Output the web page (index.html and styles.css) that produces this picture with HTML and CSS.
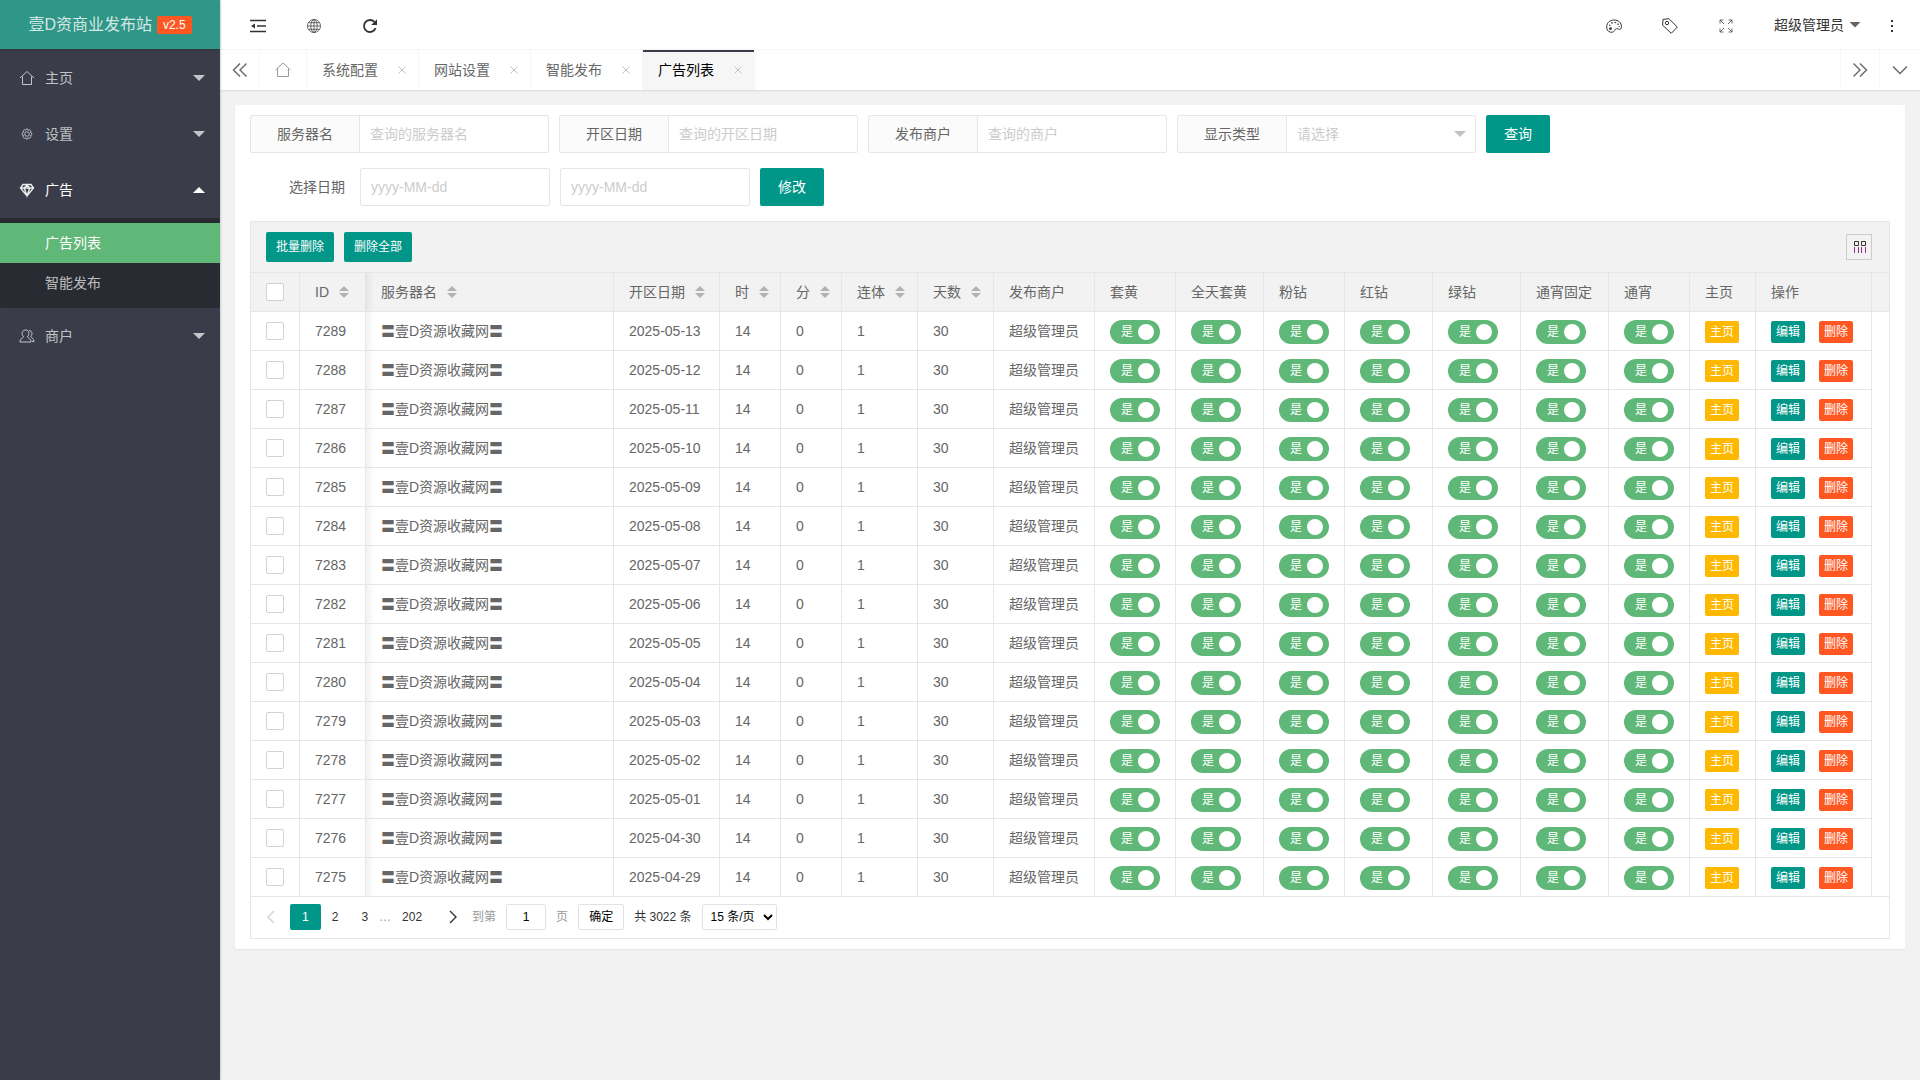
FILE: index.html
```html
<!DOCTYPE html>
<html lang="zh-CN">
<head>
<meta charset="utf-8">
<title>广告列表</title>
<link rel="stylesheet" href="styles.css">
</head>
<body>
<div class="app">
  <aside class="side">
    <div class="logo"><span>壹D资商业发布站</span><span class="version">v2.5</span></div>
    <nav class="menu">
      <a class="menu-item" href="#">
        <svg class="menu-icon" viewBox="0 0 16 16"><path d="M1 8 8 1.5 15 8M3.5 6.5v8h9v-8"/></svg>
        <span>主页</span><i class="caret"></i>
      </a>
      <a class="menu-item" href="#">
        <svg class="menu-icon" viewBox="-1 -1 18 18"><circle cx="8" cy="8" r="2.6"/><path d="M6.500 3.800a1.500 1.500 0 0 1 3 0 1.500 1.500 0 0 1 2.200 2.400 1.500 1.500 0 0 1 0 3.600 1.500 1.500 0 0 1-2.200 2.400 1.500 1.500 0 0 1-3 0 1.500 1.500 0 0 1-2.200-2.400 1.500 1.500 0 0 1 0-3.600 1.500 1.500 0 0 1 2.200-2.400z"/></svg>
        <span>设置</span><i class="caret"></i>
      </a>
      <a class="menu-item open" href="#">
        <svg class="menu-icon heavy" viewBox="0 0 16 16"><path d="M4 2.500h8L14.500 6 8 14 1.500 6zM1.500 6h13M5.200 6 8 14l2.800-8M5.200 6 8 3l2.800 3"/></svg>
        <span>广告</span><i class="caret up"></i>
      </a>
      <div class="submenu">
        <a class="active" href="#">广告列表</a>
        <a href="#">智能发布</a>
      </div>
      <a class="menu-item" href="#">
        <svg class="menu-icon" viewBox="0 0 16 16"><path d="M4.500 8.800C2 6 3 2 6.500 2S11 6 8.500 8.800c0 1.200 3.500 1.400 3.500 5.200H1c0-3.800 3.500-4 3.500-5.200zM10 2.500c3 0 4 3.500 1.800 6 .2 1.300 3.200 1.500 3.200 5h-2"/></svg>
        <span>商户</span><i class="caret"></i>
      </a>
    </nav>
  </aside>

  <div class="main">
    <header class="header">
      <div class="header-group left">
        <button class="head-btn" aria-label="侧边伸缩"><svg viewBox="0 0 16 16"><path stroke-width="1.400" d="M0 2.500h16M7 8h9M0 13.500h16"/><path class="solid" d="M1 8l4-2.500v5z"/></svg></button>
        <button class="head-btn" aria-label="前台"><svg class="fine" viewBox="0 0 16 16"><circle cx="8" cy="8" r="6.500"/><ellipse cx="8" cy="8" rx="3.200" ry="6.500"/><path d="M8 1.500v13M1.500 8h13M2.500 4.700h11M2.500 11.300h11"/></svg></button>
        <button class="head-btn" aria-label="刷新"><svg viewBox="0 0 16 16"><path stroke-width="1.800" d="M13.600 10.200A6 6 0 1 1 12.500 4"/><path class="solid" d="M15 1.200V7H9.200z"/></svg></button>
      </div>
      <div class="header-group">
        <button class="head-btn" aria-label="主题"><svg viewBox="0 0 16 16"><path d="M4.500 14.200C1.500 13.600.5 11 .7 8.500 1 4.500 4 2 8 2c4.500 0 7.500 3 7.500 6.500 0 2.500-1.500 3.500-3 2.600-1.500-.9-2.800-.6-3.300.4-.7 1.500-2 3.300-4.700 2.700z"/><circle class="solid" cx="4.500" cy="10.700" r="1.400"/><circle class="solid" cx="3.800" cy="7.300" r=".8"/><circle class="solid" cx="6" cy="4.900" r=".8"/><circle class="solid" cx="9.200" cy="4.500" r=".8"/><circle class="solid" cx="12" cy="6.200" r=".8"/><circle class="solid" cx="13.200" cy="8.600" r=".7"/></svg></button>
        <button class="head-btn" aria-label="便签"><svg viewBox="0 0 16 16"><path d="M1 1.500 6.800.6 15.300 9l-6 6.300L.6 7.200z"/><circle cx="5" cy="5" r="1.700"/></svg></button>
        <button class="head-btn" aria-label="全屏"><svg class="fine" viewBox="0 0 16 16"><path d="M2 5.500V2h3.500M2 2l4 4M10.500 2H14v3.500M14 2l-4 4M2 10.500V14h3.500M2 14l4-4M10.500 14H14v-3.500M14 14l-4-4"/></svg></button>
        <button class="user-btn">超级管理员<i class="caret"></i></button>
        <button class="head-btn" aria-label="更多"><svg viewBox="0 0 16 16"><path class="solid" d="M7 2h2v2H7zM7 7h2v2H7zM7 12h2v2H7z"/></svg></button>
      </div>
    </header>

    <nav class="tabs">
      <button class="tab-ctl" aria-label="向左"><svg viewBox="0 0 16 16"><path d="M8 1.500 1.500 8 8 14.500M14.500 1.500 8 8l6.500 6.500"/></svg></button>
      <button class="tab-home" aria-label="首页"><svg viewBox="0 0 16 16"><path d="M.5 8 8 1l7.500 7M2.500 6.500v8h11v-8"/></svg></button>
      <a class="tab" href="#">系统配置<svg viewBox="0 0 8 8"><path d="m.5.5 7 7m0-7-7 7"/></svg></a>
      <a class="tab" href="#">网站设置<svg viewBox="0 0 8 8"><path d="m.5.5 7 7m0-7-7 7"/></svg></a>
      <a class="tab" href="#">智能发布<svg viewBox="0 0 8 8"><path d="m.5.5 7 7m0-7-7 7"/></svg></a>
      <a class="tab current" href="#">广告列表<svg viewBox="0 0 8 8"><path d="m.5.5 7 7m0-7-7 7"/></svg></a>
      <button class="tab-ctl right" aria-label="向右"><svg viewBox="0 0 16 16"><path d="M1.500 1.500 8 8l-6.500 6.500M8 1.500 14.500 8 8 14.500"/></svg></button>
      <button class="tab-ctl last" aria-label="标签操作"><svg viewBox="0 0 16 16"><path d="M1 4.500 8 11.500l7-7"/></svg></button>
    </nav>

    <main class="content">
      <section class="card">
        <form class="form">
          <div class="form-row">
            <div class="pane"><label for="server">服务器名</label><input id="server" type="text" placeholder="查询的服务器名"></div>
            <div class="pane"><label for="date">开区日期</label><input id="date" type="text" placeholder="查询的开区日期"></div>
            <div class="pane"><label for="merchant">发布商户</label><input id="merchant" type="text" placeholder="查询的商户"></div>
            <div class="pane"><label for="type">显示类型</label><div class="select-box"><select id="type"><option>请选择</option></select></div></div>
            <button class="btn" type="button">查询</button>
          </div>
          <div class="form-row">
            <label class="plain-label" for="from">选择日期</label>
            <input id="from" type="text" placeholder="yyyy-MM-dd">
            <input id="to" type="text" placeholder="yyyy-MM-dd" aria-label="结束日期">
            <button class="btn" type="button">修改</button>
          </div>
        </form>

        <div class="grid">
          <div class="toolbar">
            <button class="btn small" type="button">批量删除</button>
            <button class="btn small" type="button">删除全部</button>
            <button class="cols-btn" type="button" aria-label="筛选列"><svg viewBox="0 0 14 14"><path d="M1.500 1.500h4v4h-4zM8.500 1.500h4v4h-4z"/><path class="violet" d="M1.500 7v6M5.500 7v6M8.500 7v6M12.500 7v6"/></svg></button>
          </div>
          <table>
            <colgroup>
              <col class="w49"><col class="w66"><col><col class="w106"><col class="w61"><col class="w61"><col class="w76"><col class="w76"><col class="w101"><col class="w81"><col class="w88"><col class="w81"><col class="w88"><col class="w88"><col class="w88"><col class="w81"><col class="w66"><col class="w116"><col class="w17">
            </colgroup>
            <thead>
              <tr>
                <th><input type="checkbox" aria-label="全选"></th>
                <th>ID<i class="sort"></i></th>
                <th class="edge">服务器名<i class="sort"></i></th>
                <th>开区日期<i class="sort"></i></th>
                <th>时<i class="sort"></i></th>
                <th>分<i class="sort"></i></th>
                <th>连体<i class="sort"></i></th>
                <th>天数<i class="sort"></i></th>
                <th>发布商户</th><th>套黄</th><th>全天套黄</th><th>粉钻</th><th>红钻</th><th>绿钻</th><th>通宵固定</th><th>通宵</th><th>主页</th><th>操作</th><th class="filler"></th>
              </tr>
            </thead>
            <tbody id="rows"></tbody>
          </table>
          <div class="pager">
            <a class="page arrow off" href="#" aria-label="上一页"><svg viewBox="0 0 8 14"><path d="M7 1 1 7l6 6"/></svg></a>
            <a class="page on" href="#">1</a>
            <a class="page" href="#">2</a>
            <a class="page" href="#">3</a>
            <span class="dots">…</span>
            <a class="page" href="#">202</a>
            <a class="page arrow" href="#" aria-label="下一页"><svg viewBox="0 0 8 14"><path d="m1 1 6 6-6 6"/></svg></a>
            <label class="muted" for="goto">到第</label>
            <input id="goto" type="text" value="1">
            <span class="muted">页</span>
            <button class="go" type="button">确定</button>
            <span class="total">共 3022 条</span>
            <select class="limit" aria-label="每页条数"><option>15 条/页</option></select>
          </div>
        </div>
      </section>
    </main>
  </div>
</div>
<script src="app.js"></script>
</body>
</html>
```

FILE: styles.css
```css
* { box-sizing: border-box; }

body {
  margin: 0;
  background: #f2f2f2;
  color: #666;
  font: 14px/24px "Liberation Sans", "Noto Sans CJK SC", sans-serif;
}

a { color: inherit; text-decoration: none; }
button, input, select { font: inherit; color: inherit; margin: 0; }
button { background: none; border: 0; padding: 0; cursor: pointer; }
svg { display: block; fill: none; stroke: currentColor; stroke-width: 1; }
svg .solid { fill: currentColor; stroke: none; }

.app { display: flex; min-height: 100vh; }

/* sidebar */
.side {
  flex: none;
  width: 220px;
  background: #3a3d49;
  color: rgba(255, 255, 255, .7);
  box-shadow: 1px 0 2px rgba(0, 0, 0, .15);
  z-index: 2;
}
.logo {
  display: flex;
  align-items: center;
  justify-content: center;
  gap: 5px;
  height: 49px;
  background: #2f9688;
  color: rgba(255, 255, 255, .8);
  font-size: 16px;
  box-shadow: 0 1px 2px rgba(0, 0, 0, .15);
}
.version {
  padding: 0 6px;
  border-radius: 2px;
  background: #ff5722;
  color: #fff;
  font-size: 12px;
  line-height: 18px;
}
.menu { padding-top: 1px; }
.menu-item {
  display: flex;
  align-items: center;
  gap: 10px;
  height: 56px;
  padding: 0 15px 0 19px;
}
.menu-item .caret { margin-left: auto; }
.menu-item.open { color: #fff; }
.menu-icon { width: 16px; height: 16px; }
.menu-icon.heavy { stroke-width: 1.4; opacity: .9; }
.caret {
  width: 12px;
  height: 6px;
  background: currentColor;
  clip-path: polygon(0 0, 100% 0, 50% 100%);
}
.caret.up { clip-path: polygon(50% 0, 100% 100%, 0 100%); }
.submenu { padding: 5px 0; background: #292b33; border-radius: 2px; }
.submenu a { display: block; padding-left: 45px; line-height: 40px; }
.submenu .active { background: #5fb878; color: #fff; }

/* header */
.main { flex: 1; min-width: 0; }
.header {
  display: flex;
  justify-content: space-between;
  height: 50px;
  background: #fff;
  border-bottom: 1px solid #f6f6f6;
  color: #333;
}
.header-group { display: flex; }
.header-group.left { padding-left: 10px; }
.head-btn { display: grid; place-items: center; width: 56px; padding-top: 2px; }
.head-btn svg { width: 16px; height: 16px; }
.head-btn .fine { stroke-width: .7; }
.user-btn { display: flex; align-items: center; gap: 5px; padding: 0 3px 0 20px; }
.user-btn .caret { background: #666; }

/* tabs */
.tabs {
  display: flex;
  height: 40px;
  background: #fff;
  box-shadow: 0 1px 2px rgba(0, 0, 0, .1);
}
.tabs button { display: grid; place-items: center; border-right: 1px solid #f6f6f6; }
.tabs button svg { width: 16px; height: 16px; }
.tab-ctl { width: 40px; }
.tab-home { width: 47px; color: #999; }
.tabs .right { margin-left: auto; border-left: 1px solid #f6f6f6; }
.tabs .last { border-right: 0; }
.tab-ctl svg { stroke-width: 1.4; }
.tab {
  display: flex;
  align-items: center;
  justify-content: space-between;
  width: 112px;
  padding: 0 12px 0 15px;
  border-right: 1px solid #f6f6f6;
}
.tab svg { width: 8px; height: 8px; color: #c2c2c2; }
.tab.current { background: #f6f6f6; color: #000; box-shadow: inset 0 2px #3a3d49; }

/* card and search form */
.content { padding: 15px; }
.card {
  padding: 10px 15px;
  background: #fff;
  border-radius: 2px;
  box-shadow: 0 1px 2px rgba(0, 0, 0, .05);
}
.form { display: grid; gap: 15px; }
.form-row { display: flex; flex-wrap: wrap; gap: 10px; }
.form input, .form select {
  width: 190px;
  height: 38px;
  padding: 0 10px;
  border: 1px solid #e6e6e6;
  border-radius: 2px;
  background: #fff;
}
.form ::placeholder { color: #ccc; opacity: 1; }
.pane { display: flex; }
.pane label {
  width: 110px;
  margin-right: -1px;
  border: 1px solid #e6e6e6;
  border-radius: 2px 0 0 2px;
  background: #fbfbfb;
  line-height: 36px;
  text-align: center;
}
.form .pane input, .form .pane select { border-radius: 0 2px 2px 0; }
.select-box { position: relative; }
.form .select-box select { appearance: none; color: #ccc; }
.select-box::after {
  content: "";
  position: absolute;
  right: 10px;
  top: 16px;
  width: 12px;
  height: 6px;
  background: #c2c2c2;
  clip-path: polygon(0 0, 100% 0, 50% 100%);
  pointer-events: none;
}
.plain-label { width: 100px; padding-right: 5px; line-height: 38px; text-align: right; }
.btn {
  height: 38px;
  padding: 0 18px;
  border-radius: 2px;
  background: #009688;
  color: #fff;
}
.btn.small { height: 30px; padding: 0 10px; font-size: 12px; }

/* data grid */
.grid { margin-top: 15px; border: 1px solid #e6e6e6; }
.toolbar {
  display: flex;
  align-items: center;
  gap: 10px;
  height: 51px;
  padding: 0 17px 0 15px;
  background: #f2f2f2;
  border-bottom: 1px solid #e6e6e6;
}
.cols-btn {
  display: grid;
  place-items: center;
  width: 26px;
  height: 26px;
  margin-left: auto;
  padding-left: 2px;
  border: 1px solid #ccc;
  color: #333;
}
.cols-btn svg { width: 14px; height: 14px; }
.cols-btn .violet { stroke: #84308c; }

table { width: 100%; table-layout: fixed; border-collapse: separate; border-spacing: 0; }
th, td {
  height: 39px;
  padding: 0 0 0 15px;
  border-right: 1px solid #e6e6e6;
  border-bottom: 1px solid #e6e6e6;
  font-weight: 400;
  text-align: left;
  white-space: nowrap;
}
thead tr { background: #f2f2f2; }
.filler { padding: 0; border-right: 0; }
tbody tr:not(:last-child) .filler { border-bottom: 0; }
.edge { background: linear-gradient(90deg, rgba(0, 0, 0, .05), transparent 8px); }
.w17 { width: 17px; }
.w49 { width: 49px; }
.w61 { width: 61px; }
.w66 { width: 66px; }
.w76 { width: 76px; }
.w81 { width: 81px; }
.w88 { width: 88px; }
.w101 { width: 101px; }
.w106 { width: 106px; }
.w116 { width: 116px; }

table input[type="checkbox"] {
  display: block;
  appearance: none;
  width: 18px;
  height: 18px;
  border: 1px solid #d2d2d2;
  border-radius: 2px;
  background: #fff;
}
.sort {
  display: inline-block;
  width: 10px;
  height: 12px;
  margin-left: 10px;
  vertical-align: -1px;
  background: #b2b2b2;
  clip-path: polygon(50% 0, 100% 5px, 0 5px, 0 7px, 100% 7px, 50% 100%, 0 7px, 0 5px);
}
.switch {
  display: flex;
  align-items: center;
  justify-content: space-between;
  width: 50px;
  height: 24px;
  margin-top: 2px;
  padding: 0 6px 0 11px;
  border-radius: 12px;
  background: #5fb878;
  color: #fff;
  font-size: 12px;
}
table .switch input { width: 16px; height: 16px; border: 0; border-radius: 50%; order: 2; }
.actions { display: flex; gap: 14px; padding-top: 2px; }
.tag {
  padding: 0 5px;
  border-radius: 2px;
  color: #fff;
  font-size: 12px;
  line-height: 22px;
}
.tag.home { background: #ffb800; }
.tag.edit { background: #009688; }
.tag.del { background: #ff5722; }

/* pagination */
.pager {
  display: flex;
  align-items: center;
  height: 41px;
  padding-bottom: 1px;
  color: #333;
  font-size: 12px;
}
.page { margin-right: -1px; padding: 0 12px; border-radius: 2px; line-height: 26px; }
.page.arrow { display: grid; place-items: center; width: 40px; height: 26px; padding: 0; }
.page.arrow svg { width: 8px; height: 14px; stroke-width: 1.4; }
.page.off { color: #d2d2d2; }
.page.on { background: #009688; color: #fff; }
.dots { color: #999; margin-right: -1px; }
.muted { color: #999; }
.pager input, .go, .limit {
  height: 26px;
  border: 1px solid #e2e2e2;
  border-radius: 2px;
  background: #fff;
}
.pager input { width: 40px; margin: 0 10px; padding: 0; text-align: center; color: #000; }
.go { margin: 0 10px; padding: 0 10px; color: #000; }
.limit { width: 75px; margin-left: 10px; padding: 0 4px; color: #000; }
```

FILE: app.js
```js
const PER_PAGE = 15;
const LAST_ID = 7289;
const LAST_DATE = Date.UTC(2025, 4, 13);
const DAY = 86400000;
const SWITCHES = ['套黄', '全天套黄', '粉钻', '红钻', '绿钻', '通宵固定', '通宵'];

const switchCell = (name) =>
  `<td><label class="switch"><input type="checkbox" checked aria-label="${name}"><span>是</span></label></td>`;

const row = (i) => {
  const date = new Date(LAST_DATE - i * DAY).toISOString().slice(0, 10);
  return `<tr>
    <td><input type="checkbox" aria-label="选择 ${LAST_ID - i}"></td>
    <td>${LAST_ID - i}</td>
    <td class="edge">〓壹D资源收藏网〓</td>
    <td>${date}</td><td>14</td><td>0</td><td>1</td><td>30</td>
    <td>超级管理员</td>
    ${SWITCHES.map(switchCell).join('')}
    <td><div class="actions"><a class="tag home" href="#">主页</a></div></td>
    <td><div class="actions"><a class="tag edit" href="#">编辑</a><a class="tag del" href="#">删除</a></div></td>
    <td class="filler"></td>
  </tr>`;
};

document.getElementById('rows').innerHTML =
  Array.from({ length: PER_PAGE }, (_, i) => row(i)).join('');
```
